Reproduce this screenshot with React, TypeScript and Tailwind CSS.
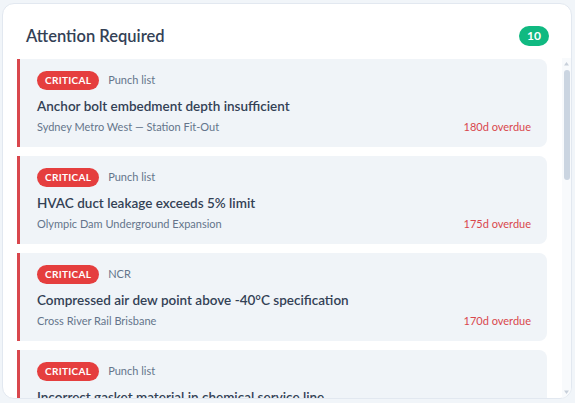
import React from "react";

type Item = { kind: string; title: string; project: string; days: number };

const items: Item[] = [
  { kind: "Punch list", title: "Anchor bolt embedment depth insufficient", project: "Sydney Metro West — Station Fit-Out", days: 180 },
  { kind: "Punch list", title: "HVAC duct leakage exceeds 5% limit", project: "Olympic Dam Underground Expansion", days: 175 },
  { kind: "NCR", title: "Compressed air dew point above -40°C specification", project: "Cross River Rail Brisbane", days: 170 },
  { kind: "Punch list", title: "Incorrect gasket material in chemical service line", project: "Olympic Dam Underground Expansion", days: 165 },
  { kind: "NCR", title: "Fire damper access panel missing", project: "Sydney Metro West — Station Fit-Out", days: 160 },
  { kind: "Punch list", title: "Cable tray support spacing exceeds design", project: "Cross River Rail Brisbane", days: 155 },
  { kind: "NCR", title: "Concrete cover below minimum at slab edge", project: "Sydney Metro West — Station Fit-Out", days: 150 },
  { kind: "Punch list", title: "Emergency lighting duration test failed", project: "Olympic Dam Underground Expansion", days: 145 },
  { kind: "NCR", title: "Weld porosity detected on pipe spool", project: "Cross River Rail Brisbane", days: 140 },
  { kind: "Punch list", title: "Handrail height non-compliant at stair 3", project: "Sydney Metro West — Station Fit-Out", days: 135 },
];

export default function App() {
  return (
    <div className="w-[575px] h-[403px] bg-[#f1f5f9] pl-[2px] pt-[3px]" style={{ fontFamily: "Lato, 'Noto Sans', sans-serif" }}>
      <div className="w-[570px] h-[396px] bg-white border border-[#e2e8f0] rounded-xl flex flex-col overflow-hidden">
        <div className="flex items-start justify-between pl-[23px] pr-[22px] pt-[21px] h-[54px] shrink-0">
          <h2 className="text-[16.5px] leading-[22px] font-semibold text-[#334155]">Attention Required</h2>
          <span className="mt-[1px] h-[20px] px-[8px] rounded-full bg-[#10b981] text-white text-[12px] font-bold leading-[20px]">10</span>
        </div>
        <div className="flex-1 min-h-0 flex">
          <div className="flex-1 min-w-0 overflow-hidden pl-[14px] pr-[15px] pt-[1px] flex flex-col gap-[9px]">
            {items.map((it, i) => (
              <div key={i} className="shrink-0 bg-[#f0f4f8] border-l-[3px] border-[#d9474d] rounded-r-lg pl-[17px] pr-[16px] pt-[11px] pb-[12px]">
                <div className="flex items-center gap-[9px] h-[20px]">
                  <span className="h-[19px] px-[8px] rounded-full bg-[#e53e3e] text-white text-[10px] font-bold leading-[19px] tracking-[0.3px]">CRITICAL</span>
                  <span className="text-[11px] text-[#64748b]">{it.kind}</span>
                </div>
                <div className="mt-[6px] text-[13.5px] leading-[20px] font-semibold text-[#334155]">{it.title}</div>
                <div className="mt-[3px] flex justify-between items-baseline text-[11px] leading-[16px]">
                  <span className="text-[#64748b]">{it.project}</span>
                  <span className="text-[#d9474d]">{it.days}d overdue</span>
                </div>
              </div>
            ))}
          </div>
          <div className="w-[9px] shrink-0 bg-[#f8fafc] flex flex-col items-center">
            <svg width="7" height="10" viewBox="0 0 7 10" className="shrink-0 mt-[1px]">
              <path d="M3.5 3 L6 6.5 L1 6.5 Z" fill="#c8d0da" />
            </svg>
            <div className="mt-[1px] w-[6px] h-[110px] rounded-[3px] bg-[#cbd5e1] ml-[1px]" />
            <div className="flex-1" />
            <svg width="7" height="10" viewBox="0 0 7 10" className="shrink-0 mb-[1px]">
              <path d="M3.5 7 L6 3.5 L1 3.5 Z" fill="#c8d0da" />
            </svg>
          </div>
        </div>
      </div>
    </div>
  );
}
